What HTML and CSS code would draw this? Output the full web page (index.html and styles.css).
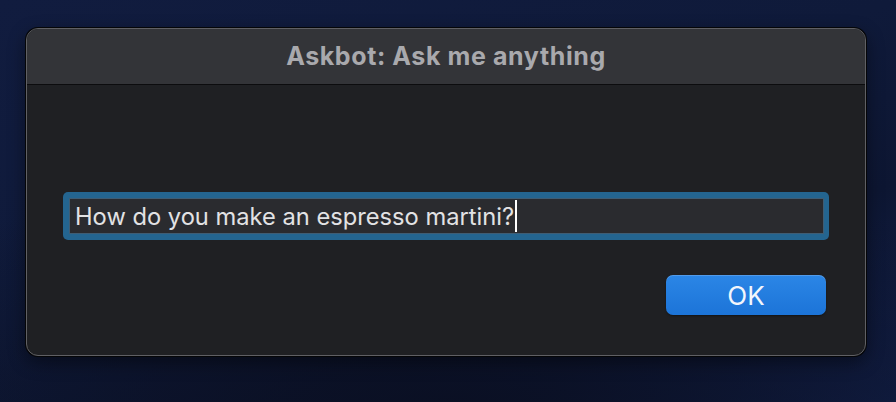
FILE: index.html
```html
<!DOCTYPE html>
<html>
<head>
<meta charset="utf-8">
<link rel="stylesheet" href="styles.css">
</head>
<body>
<div class="desktop">
  <div class="window">
    <div class="titlebar">Askbot: Ask me anything</div>
    <div class="content">
      <div class="field-ring">
        <div class="field"><span class="value">How do you make an espresso martini?</span><span class="caret"></span></div>
      </div>
      <div class="actions">
        <button class="ok">OK</button>
      </div>
    </div>
  </div>
</div>
</body>
</html>
```
FILE: styles.css
```css
html, body {
  margin: 0;
  padding: 0;
}
body {
  width: 896px;
  height: 402px;
  overflow: hidden;
  font-family: Inter, "Liberation Sans", Arial, sans-serif;
}
.desktop {
  width: 896px;
  height: 402px;
  padding: 28px 0 0 26px;
  box-sizing: border-box;
  background: radial-gradient(ellipse 700px 260px at 450px 420px, #0a0f22 0%, rgba(10,15,34,0) 100%),
              linear-gradient(160deg, #111c3f 0%, #0f1a3a 45%, #0d1632 70%, #12204a 100%);
}
.window {
  width: 840px;
  height: 328px;
  box-sizing: border-box;
  border-radius: 12px;
  border: 1px solid #606064;
  box-shadow: 0 0 0 1px #050608, 0 6px 18px rgba(0,0,0,0.45);
  background: #1f2023;
  overflow: hidden;
  display: flex;
  flex-direction: column;
}
.titlebar {
  height: 56px;
  flex: none;
  background: #333438;
  border-bottom: 1px solid #0c0c0e;
  display: flex;
  align-items: center;
  justify-content: center;
  color: #a9a9ad;
  font-weight: 700;
  font-size: 25px;
  letter-spacing: 0.6px;
  padding-bottom: 2px;
  box-sizing: border-box;
}
.content {
  flex: 1;
  padding: 107px 36px 0 36px;
  display: flex;
  flex-direction: column;
}
.field-ring {
  height: 48px;
  box-sizing: border-box;
  border-radius: 5px;
  background: #246590;
  padding: 6px 5px 6px 6px;
}
.field {
  height: 100%;
  box-sizing: border-box;
  background: #2a2b2f;
  border: 1px solid #3f5d74;
  display: flex;
  align-items: center;
  padding-left: 5px;
  color: #e2e2e4;
  font-size: 23.7px;
}
.caret {
  display: inline-block;
  width: 2px;
  height: 32px;
  background: #ffffff;
  margin-left: 1px;
}
.actions {
  display: flex;
  justify-content: flex-end;
  padding-top: 35px;
  padding-right: 3px;
}
.ok {
  width: 160px;
  height: 40px;
  border: none;
  border-radius: 7px;
  background: linear-gradient(#2b86e6, #1c74d8);
  box-shadow: inset 0 1px 0 rgba(255,255,255,0.18), 0 1px 2px rgba(0,0,0,0.4);
  color: #f2f6fc;
  font-family: Inter, "Liberation Sans", Arial, sans-serif;
  font-size: 26px;
  padding: 0;
}
```
